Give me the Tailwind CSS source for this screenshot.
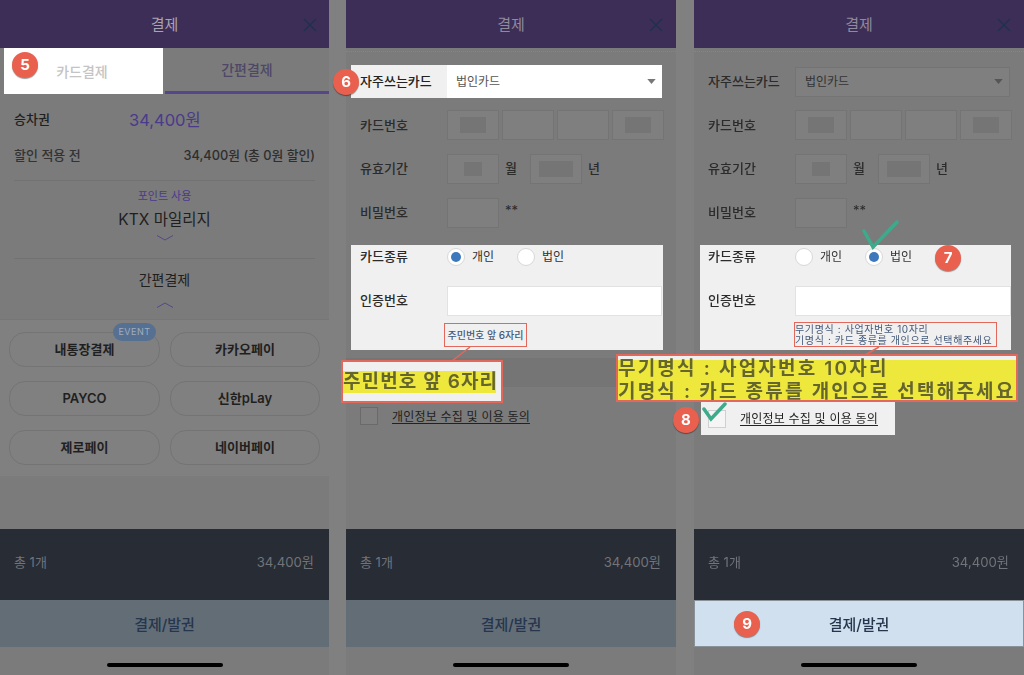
<!DOCTYPE html>
<html lang="ko">
<head>
<meta charset="utf-8">
<script src="https://cdn.jsdelivr.net/npm/@tailwindcss/browser@4"></script>
</head>
<body class="m-0 overflow-hidden bg-[#808080]">
<div class="flex h-[675px] w-[1024px] overflow-hidden font-['Inter','Noto_Sans_CJK_KR',sans-serif] text-[13px] text-[#2b2b2b] blur-[0.45px]">

<!-- Panel 1 -->
<section class="relative flex h-full w-[329px] flex-col bg-[#7b7b7b] mr-[17px]">
  <header class="flex h-[48px] shrink-0 items-center justify-center bg-[#3d2e58] pt-[2px] text-[15px] text-[#a8a4b0]">결제
    <svg class="absolute left-[303px] top-[18px] h-[14px] w-[14px]" viewBox="0 0 14 14" fill="none" stroke="#22304f" stroke-width="1.6"><path d="M1 1l12 12M13 1L1 13"/></svg>
  </header>
  <div class="flex h-[46px] shrink-0">
    <div class="ml-[4px] flex w-[159px] items-center justify-center bg-white pr-[3px] text-[14px] font-medium text-[#c4c4c4]">카드결제</div>
    <div class="ml-[2px] flex flex-1 items-center justify-center border-b-[3px] border-[#56468a] text-[14px] font-medium text-[#4e4866]">간편결제</div>
  </div>
  <div class="flex h-[52px] shrink-0 items-center px-[14px]">
    <span class="w-[115px] font-medium text-[#1f1f1f]">승차권</span>
    <span class="text-[16.5px] text-[#4a3a8c]">34,400원</span>
  </div>
  <div class="flex h-[19px] shrink-0 items-center justify-between px-[14px]">
    <span class="font-medium text-[#333]">할인 적용 전</span>
    <span class="text-[12.8px] font-medium text-[#2e2e2e]">34,400원 (총 0원 할인)</span>
  </div>
  <div class="mx-[14px] mt-[15px] flex h-[78px] shrink-0 flex-col items-center border-t border-[#727272]">
    <span class="mt-[7px] text-[11px] leading-[16px] text-[#4a3a8c]">포인트 사용</span>
    <span class="mt-[5px] text-[15.5px] leading-[22px] text-[#1f1f1f]">KTX 마일리지</span>
    <svg class="mt-[4px] h-[6px] w-[16px]" viewBox="0 0 16 6" fill="none" stroke="#54488a" stroke-width="1"><path d="M0 .5L8 5l8-4.500"/></svg>
  </div>
  <div class="mx-[14px] flex h-[61px] shrink-0 flex-col items-center border-t border-[#727272]">
    <span class="mt-[11px] text-[14px] leading-[20px] text-[#1f1f1f]">간편결제</span>
    <svg class="mt-[12px] h-[6px] w-[16px]" viewBox="0 0 16 6" fill="none" stroke="#54488a" stroke-width="1"><path d="M0 5.500L8 1l8 4.500"/></svg>
  </div>
  <div class="relative grid h-[157px] shrink-0 grid-cols-[151px_150px] content-start gap-x-[10px] gap-y-[14px] border-t border-[#767676] bg-[#808080] pl-[9px] pt-[12px] text-[13px] font-semibold text-[#1f1f1f]">
    <div class="flex h-[35px] items-center justify-center rounded-[16px] border border-[#747474]">내통장결제</div>
    <div class="flex h-[35px] items-center justify-center rounded-[16px] border border-[#747474]">카카오페이</div>
    <div class="flex h-[35px] items-center justify-center rounded-[16px] border border-[#747474]">PAYCO</div>
    <div class="flex h-[35px] items-center justify-center rounded-[16px] border border-[#747474]">신한pLay</div>
    <div class="flex h-[35px] items-center justify-center rounded-[16px] border border-[#747474]">제로페이</div>
    <div class="flex h-[35px] items-center justify-center rounded-[16px] border border-[#747474]">네이버페이</div>
    <span class="absolute left-[113px] top-[3px] flex h-[18px] w-[43px] items-center justify-center rounded-full bg-[#567092] text-[9px] font-normal tracking-[0.5px] text-[#a0acbf]">EVENT</span>
  </div>
  <div class="mt-auto flex h-[71px] shrink-0 items-center justify-between bg-[#282c34] pb-[3px] pl-[14px] pr-[15px] text-[#71747a]"><span>총 1개</span><span class="text-[13.2px]">34,400원</span></div>
  <div class="flex h-[47px] shrink-0 items-center justify-center bg-[#636d76] pt-[3px] text-[15px] font-medium text-[#26364e]">결제/발권</div>
  <div class="flex h-[28px] shrink-0 items-center justify-center"><i class="mt-[8px] block h-[4px] w-[116px] rounded-full bg-black"></i></div>
  <span class="absolute left-[12px] top-[52px] flex h-[26px] w-[26px] items-center justify-center rounded-full bg-[#e9604f] text-[15px] font-bold text-white shadow-[0_1px_1px_#0006]">5</span>
</section>

<!-- Panel 2 -->
<section class="relative flex h-full w-[330px] flex-col bg-[#7b7b7b] mr-[18px]">
  <header class="relative flex h-[48px] shrink-0 items-center justify-center bg-[#3d2e58] pt-[2px] text-[15px] text-[#8f8a9c]">결제
    <svg class="absolute left-[303px] top-[18px] h-[14px] w-[14px]" viewBox="0 0 14 14" fill="none" stroke="#22304f" stroke-width="1.6"><path d="M1 1l12 12M13 1L1 13"/></svg>
  </header>
  <div class="mt-[3px] shrink-0 border-t border-dotted border-[#858585]"></div>
  <div class="ml-[5px] mr-[14px] mt-[13px] flex h-[33px] shrink-0 items-center bg-[#f0f0f0]">
    <span class="w-[96px] pl-[9px] font-medium text-[#222]">자주쓰는카드</span>
    <div class="flex h-full flex-1 items-center justify-between bg-white pl-[9px] pr-[6px] text-[12px] text-[#555]">법인카드
      <svg class="h-[5px] w-[9px]" viewBox="0 0 10 6" fill="#777"><path d="M0 0h10L5 6z"/></svg></div>
  </div>
  <div class="mt-[12px] flex h-[30px] shrink-0 items-center pl-[14px]">
    <span class="w-[87px] pt-[2px] font-medium text-[#2b2b2b]">카드번호</span>
    <div class="flex gap-[3px]">
      <div class="flex h-[30px] w-[52px] items-center justify-center border border-[#747474] bg-[#7f7f7f]"><i class="block h-[16px] w-[26px] bg-[#757575]"></i></div>
      <div class="h-[30px] w-[52px] border border-[#747474] bg-[#7f7f7f]"></div>
      <div class="h-[30px] w-[52px] border border-[#747474] bg-[#7f7f7f]"></div>
      <div class="flex h-[30px] w-[52px] items-center justify-center border border-[#747474] bg-[#7f7f7f]"><i class="block h-[16px] w-[26px] bg-[#757575]"></i></div>
    </div>
  </div>
  <div class="mt-[14px] flex h-[30px] shrink-0 items-center pl-[14px]">
    <span class="w-[87px] font-medium text-[#2b2b2b]">유효기간</span>
    <div class="flex h-[30px] w-[52px] items-center justify-center border border-[#747474] bg-[#7f7f7f]"><i class="block h-[14px] w-[18px] bg-[#757575]"></i></div>
    <span class="ml-[6px] w-[25px] font-medium">월</span>
    <div class="flex h-[30px] w-[52px] items-center justify-center border border-[#747474] bg-[#7f7f7f]"><i class="block h-[16px] w-[34px] bg-[#757575]"></i></div>
    <span class="ml-[6px] font-medium">년</span>
  </div>
  <div class="mt-[14px] flex h-[30px] shrink-0 items-center pl-[14px]">
    <span class="w-[87px] font-medium text-[#2b2b2b]">비밀번호</span>
    <div class="h-[30px] w-[52px] border border-[#747474] bg-[#7f7f7f]"></div>
    <span class="ml-[6px] -mt-[4px]">**</span>
  </div>
  <div class="ml-[5px] mr-[13px] mt-[17px] h-[105px] shrink-0 bg-[#f0f0f0] pl-[9px]">
    <div class="flex h-[24px] items-center">
      <span class="w-[87px] font-medium text-[#2b2b2b]">카드종류</span>
      <span class="flex h-[18px] w-[18px] items-center justify-center rounded-full border border-[#d8d8d8] bg-white"><i class="block h-[10px] w-[10px] rounded-full bg-[#3d78bd]"></i></span>
      <span class="ml-[7px] w-[45px] text-[12px] text-[#333]">개인</span>
      <span class="h-[18px] w-[18px] rounded-full border border-[#d8d8d8] bg-white"></span>
      <span class="ml-[7px] text-[12px] text-[#333]">법인</span>
    </div>
    <div class="mt-[17px] flex h-[30px] items-center">
      <span class="w-[87px] font-medium text-[#2b2b2b]">인증번호</span>
      <div class="h-[30px] w-[215px] border border-[#e2e2e2] bg-white"></div>
    </div>
  </div>
  <div class="mt-[8px] h-[29px] shrink-0 bg-[#757575]"></div>
  <div class="mt-[20px] flex h-[18px] shrink-0 items-center pl-[14px]">
    <span class="h-[18px] w-[18px] border border-[#6a6a6a] bg-[#7f7f7f]"></span>
    <span class="ml-[14px] mt-[1px] text-[12px] tracking-[0.2px] text-[#222] underline underline-offset-2">개인정보 수집 및 이용 동의</span>
  </div>
  <div class="mt-auto flex h-[71px] shrink-0 items-center justify-between bg-[#282c34] pb-[3px] pl-[14px] pr-[15px] text-[#71747a]"><span>총 1개</span><span class="text-[13.2px]">34,400원</span></div>
  <div class="flex h-[47px] shrink-0 items-center justify-center bg-[#636d76] pt-[3px] text-[15px] font-medium text-[#26364e]">결제/발권</div>
  <div class="flex h-[28px] shrink-0 items-center justify-center"><i class="mt-[8px] block h-[4px] w-[116px] rounded-full bg-black"></i></div>

  <span class="absolute -left-[13px] top-[69px] flex h-[26px] w-[26px] items-center justify-center rounded-full bg-[#e9604f] text-[15px] font-bold text-white shadow-[0_1px_1px_#0006]">6</span>
  <div class="absolute left-[98px] top-[323px] flex h-[24px] w-[83px] items-center justify-center border-[1.5px] border-[#e2685c] text-[10px] font-medium whitespace-nowrap text-[#44597a]">주민번호 앞 6자리</div>
  <svg class="absolute left-[100px] top-[346px] h-[16px] w-[26px]" viewBox="0 0 26 16" fill="none" stroke="#e2685c" stroke-width="1.5"><path d="M24 1L6 15"/></svg>
  <div class="absolute -left-[5px] top-[360px] flex h-[43px] w-[162px] items-center border-[2px] border-[#e2685c] bg-[#f0f0f0]">
    <span class="w-[153px] bg-[#eee83c] text-[19px] leading-[22px] font-semibold tracking-[1.1px] whitespace-nowrap text-[#65652e] blur-[0.7px]">주민번호 앞 6자리</span>
  </div>
</section>

<!-- Panel 3 -->
<section class="relative flex h-full w-[330px] flex-col bg-[#7b7b7b]">
  <header class="relative flex h-[48px] shrink-0 items-center justify-center bg-[#3d2e58] pt-[2px] text-[15px] text-[#8f8a9c]">결제
    <svg class="absolute left-[303px] top-[18px] h-[14px] w-[14px]" viewBox="0 0 14 14" fill="none" stroke="#22304f" stroke-width="1.6"><path d="M1 1l12 12M13 1L1 13"/></svg>
  </header>
  <div class="mt-[3px] shrink-0 border-t border-dotted border-[#858585]"></div>
  <div class="mt-[13px] flex h-[33px] shrink-0 items-center pl-[14px] pr-[14px]">
    <span class="w-[87px] font-medium text-[#2b2b2b]">자주쓰는카드</span>
    <div class="flex h-[30px] flex-1 items-center justify-between border border-[#747474] bg-[#7f7f7f] pl-[9px] pr-[6px] text-[12px] text-[#333]">법인카드
      <svg class="h-[5px] w-[9px]" viewBox="0 0 10 6" fill="#555"><path d="M0 0h10L5 6z"/></svg></div>
  </div>
  <div class="mt-[12px] flex h-[30px] shrink-0 items-center pl-[14px]">
    <span class="w-[87px] pt-[2px] font-medium text-[#2b2b2b]">카드번호</span>
    <div class="flex gap-[3px]">
      <div class="flex h-[30px] w-[52px] items-center justify-center border border-[#747474] bg-[#7f7f7f]"><i class="block h-[16px] w-[26px] bg-[#757575]"></i></div>
      <div class="h-[30px] w-[52px] border border-[#747474] bg-[#7f7f7f]"></div>
      <div class="h-[30px] w-[52px] border border-[#747474] bg-[#7f7f7f]"></div>
      <div class="flex h-[30px] w-[52px] items-center justify-center border border-[#747474] bg-[#7f7f7f]"><i class="block h-[16px] w-[26px] bg-[#757575]"></i></div>
    </div>
  </div>
  <div class="mt-[14px] flex h-[30px] shrink-0 items-center pl-[14px]">
    <span class="w-[87px] font-medium text-[#2b2b2b]">유효기간</span>
    <div class="flex h-[30px] w-[52px] items-center justify-center border border-[#747474] bg-[#7f7f7f]"><i class="block h-[14px] w-[18px] bg-[#757575]"></i></div>
    <span class="ml-[6px] w-[25px] font-medium">월</span>
    <div class="flex h-[30px] w-[52px] items-center justify-center border border-[#747474] bg-[#7f7f7f]"><i class="block h-[16px] w-[34px] bg-[#757575]"></i></div>
    <span class="ml-[6px] font-medium">년</span>
  </div>
  <div class="mt-[14px] flex h-[30px] shrink-0 items-center pl-[14px]">
    <span class="w-[87px] font-medium text-[#2b2b2b]">비밀번호</span>
    <div class="h-[30px] w-[52px] border border-[#747474] bg-[#7f7f7f]"></div>
    <span class="ml-[6px] -mt-[4px]">**</span>
  </div>
  <div class="ml-[6px] mr-[13px] mt-[17px] h-[105px] shrink-0 bg-[#f0f0f0] pl-[8px]">
    <div class="flex h-[24px] items-center">
      <span class="w-[87px] font-medium text-[#2b2b2b]">카드종류</span>
      <span class="h-[18px] w-[18px] rounded-full border border-[#d8d8d8] bg-white"></span>
      <span class="ml-[7px] w-[45px] text-[12px] text-[#333]">개인</span>
      <span class="flex h-[18px] w-[18px] items-center justify-center rounded-full border border-[#d8d8d8] bg-white"><i class="block h-[10px] w-[10px] rounded-full bg-[#3d78bd]"></i></span>
      <span class="ml-[7px] text-[12px] text-[#333]">법인</span>
    </div>
    <div class="mt-[17px] flex h-[30px] items-center">
      <span class="w-[87px] font-medium text-[#2b2b2b]">인증번호</span>
      <div class="h-[30px] w-[216px] border border-[#e2e2e2] bg-white"></div>
    </div>
  </div>
  <div class="ml-[7px] mt-[52px] flex h-[33px] w-[194px] shrink-0 items-center bg-[#f0f0f0] pl-[7px]">
    <span class="h-[18px] w-[18px] border border-[#d0d0d0] bg-[#f5f5f5]"></span>
    <span class="ml-[14px] mt-[1px] text-[12px] tracking-[0.2px] text-[#222] underline underline-offset-2">개인정보 수집 및 이용 동의</span>
  </div>
  <div class="mt-auto flex h-[71px] shrink-0 items-center justify-between bg-[#282c34] pb-[3px] pl-[14px] pr-[15px] text-[#71747a]"><span>총 1개</span><span class="text-[13.2px]">34,400원</span></div>
  <div class="flex h-[47px] shrink-0 items-center justify-center border border-[#8a9299] bg-[#d0e0ee] pt-[3px] text-[15px] font-medium text-[#26364e]">결제/발권</div>
  <div class="flex h-[28px] shrink-0 items-center justify-center"><i class="mt-[8px] block h-[4px] w-[116px] rounded-full bg-black"></i></div>

  <svg class="absolute left-[168px] top-[219px] h-[32px] w-[38px]" viewBox="0 0 38 32" fill="none" stroke="#3daa8c" stroke-width="3.500" stroke-linecap="round"><path d="M2 12l9 16L35 3"/></svg>
  <span class="absolute left-[241px] top-[245px] flex h-[26px] w-[26px] items-center justify-center rounded-full bg-[#e9604f] text-[15px] font-bold text-white shadow-[0_1px_1px_#0006]">7</span>
  <div class="absolute left-[100px] top-[322px] flex h-[25px] w-[203px] flex-col justify-center border-[1.5px] border-[#e2685c] text-[10px] leading-[11px] font-normal tracking-[0.62px] whitespace-nowrap text-[#44597a]"><span>무기명식 : 사업자번호 10자리</span><span>기명식 : 카드 종류를 개인으로 선택해주세요</span></div>
  <svg class="absolute left-[170px] top-[346px] h-[10px] w-[16px]" viewBox="0 0 16 10" fill="none" stroke="#e2685c" stroke-width="1.5"><path d="M15 1L1 9"/></svg>
  <div class="absolute -left-[78px] top-[354px] h-[48px] w-[402px] overflow-hidden border-[2px] border-[#e2685c] bg-[#f0f0f0] pt-[4px]">
    <div class="flex h-[40px] flex-col justify-center bg-[#eee83c] text-[19px] leading-[23px] font-semibold tracking-[2.2px] whitespace-nowrap text-[#65652e]"><span class="blur-[0.7px]">무기명식 : 사업자번호 10자리</span><span class="blur-[0.7px]">기명식 : 카드 종류를 개인으로 선택해주세요</span></div>
  </div>
  <svg class="absolute left-[7px] top-[402px] h-[20px] w-[26px]" viewBox="0 0 26 20" fill="none" stroke="#3daa8c" stroke-width="3.500" stroke-linecap="round"><path d="M3 7l7 10L24 2"/></svg>
  <span class="absolute -left-[21px] top-[407px] flex h-[26px] w-[26px] items-center justify-center rounded-full bg-[#e9604f] text-[15px] font-bold text-white shadow-[0_1px_1px_#0006]">8</span>
  <span class="absolute left-[40px] top-[611px] flex h-[26px] w-[26px] items-center justify-center rounded-full bg-[#e9604f] text-[15px] font-bold text-white shadow-[0_1px_1px_#0006]">9</span>
</section>
</div>
</body>
</html>
